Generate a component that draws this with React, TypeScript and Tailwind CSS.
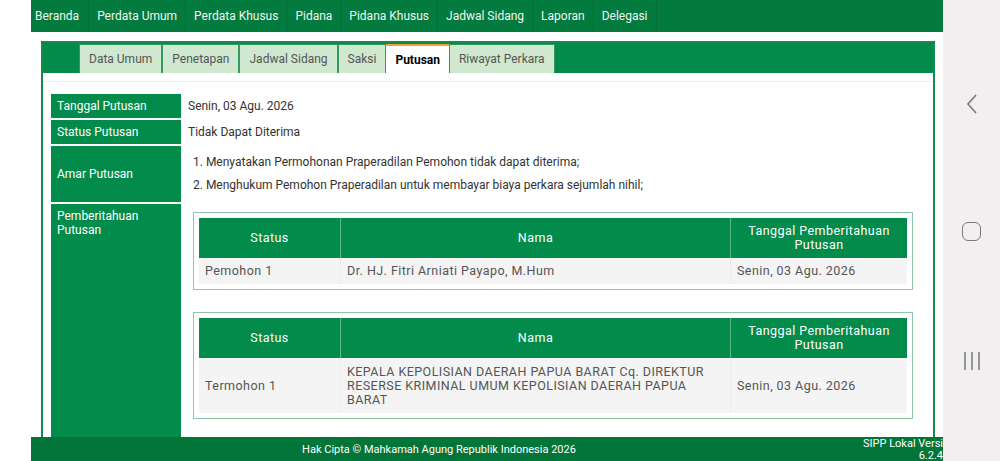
const menu = ["Beranda", "Perdata Umum", "Perdata Khusus", "Pidana", "Pidana Khusus", "Jadwal Sidang", "Laporan", "Delegasi"];
const tabs = ["Data Umum", "Penetapan", "Jadwal Sidang", "Saksi", "Putusan", "Riwayat Perkara"];

type Row = { status: string; nama: string[]; tanggal: string; h: string };

const pemberitahuan: Row[] = [
  { status: "Pemohon 1", nama: ["Dr. HJ. Fitri Arniati Payapo, M.Hum"], tanggal: "Senin, 03 Agu. 2026", h: "h-[26px]" },
  {
    status: "Termohon 1",
    nama: ["KEPALA KEPOLISIAN DAERAH PAPUA BARAT Cq. DIREKTUR", "RESERSE KRIMINAL UMUM KEPOLISIAN DAERAH PAPUA", "BARAT"],
    tanggal: "Senin, 03 Agu. 2026",
    h: "h-[55px]",
  },
];

function PihakTable({ row }: { row: Row }) {
  return (
    <div className="border border-[#8fc6a6] p-[5px]">
      <div className="flex h-[40px] bg-[#028b4b] text-white text-[12.5px] tracking-[0.45px] leading-[14px]">
        <div className="w-[142px] flex items-center justify-center border-r border-[#5bb886]">Status</div>
        <div className="w-[390px] flex items-center justify-center border-r border-[#5bb886]">Nama</div>
        <div className="flex-1 flex items-center justify-center text-center">
          Tanggal Pemberitahuan
          <br />
          Putusan
        </div>
      </div>
      <div className={`flex ${row.h} bg-[#f4f4f4] text-[#555] text-[12.5px] tracking-[0.45px] leading-[14px]`}>
        <div className="w-[142px] flex items-center pl-[6px] border-r border-[#ececec]">{row.status}</div>
        <div className="w-[390px] flex flex-col justify-center pl-[6px] border-r border-[#ececec]">
          {row.nama.map((n) => (
            <span key={n}>{n}</span>
          ))}
        </div>
        <div className="flex-1 flex items-center pl-[6px]">{row.tanggal}</div>
      </div>
    </div>
  );
}

export default function App() {
  return (
    <div className="w-[1000px] h-[461px] overflow-hidden flex bg-white" style={{ fontFamily: "Roboto, 'Liberation Sans', sans-serif" }}>
      <div className="w-[943px] flex flex-col pl-[31px]">
        {/* top menu */}
        <div className="h-[32px] bg-[#037a3e] flex items-stretch text-[12px] text-[#eef7f1] shrink-0">
          {menu.map((m, i) => (
            <div key={m} className={`flex items-center border-r border-[#026d36] ${i === 0 ? "pl-[4px] pr-[9px]" : "px-[8px]"}`}>
              {m}
            </div>
          ))}
        </div>

        <div className="flex-1 flex flex-col min-h-0 pt-[9px] pl-[10px] pr-[8px]">
          <div className="flex-1 min-h-0 flex flex-col border-x-2 border-t-2 border-[#17894b] overflow-hidden">
            {/* tabs */}
            <div className="h-[30px] bg-[#028b4b] flex items-end pl-[36px] shrink-0">
              {tabs.map((t) => {
                const active = t === "Putusan";
                return (
                  <div
                    key={t}
                    className={
                      active
                        ? "h-[29px] px-[9px] flex items-center bg-white text-black font-bold text-[12px] border-t-2 border-[#e9a43a]"
                        : "h-[29px] px-[9px] flex items-center bg-[#cfe8cf] text-[#555] text-[12px] border border-b-0 border-[#2f9c5f]"
                    }
                  >
                    {t}
                  </div>
                );
              })}
            </div>

            <div className="flex-1 min-h-0 bg-white flex flex-col">
              <div className="h-[9px] border-b border-[#eeeeee] shrink-0" />
              <div className="flex-1 flex flex-col gap-[2px] pt-[12px] pl-[8px] text-[12px]">
                <div className="flex h-[24px]">
                  <div className="w-[130px] bg-[#028b4b] text-white flex items-center pl-[6px]">Tanggal Putusan</div>
                  <div className="flex items-center pl-[7px] text-[#333]">Senin, 03 Agu. 2026</div>
                </div>
                <div className="flex h-[24px]">
                  <div className="w-[130px] bg-[#028b4b] text-white flex items-center pl-[6px]">Status Putusan</div>
                  <div className="flex items-center pl-[7px] text-[#333]">Tidak Dapat Diterima</div>
                </div>
                <div className="flex h-[56px]">
                  <div className="w-[130px] bg-[#028b4b] text-white flex items-center pl-[6px]">Amar Putusan</div>
                  <ol className="flex flex-col gap-[7px] pt-[8px] pl-[12px] text-[#333] leading-[16px]">
                    <li>1. Menyatakan Permohonan Praperadilan Pemohon tidak dapat diterima;</li>
                    <li>2. Menghukum Pemohon Praperadilan untuk membayar biaya perkara sejumlah nihil;</li>
                  </ol>
                </div>
                <div className="flex flex-1">
                  <div className="w-[130px] bg-[#028b4b] text-white pl-[6px] pt-[5px] leading-[14px]">
                    Pemberitahuan
                    <br />
                    Putusan
                  </div>
                  <div className="w-[732px] flex flex-col gap-[22px] pt-[8px] pl-[12px]">
                    {pemberitahuan.map((r) => (
                      <PihakTable key={r.status} row={r} />
                    ))}
                  </div>
                </div>
              </div>
            </div>
          </div>
        </div>

        {/* footer */}
        <div className="h-[24px] bg-[#047539] flex text-white text-[11px] shrink-0">
          <div className="flex-1 flex items-center justify-center pt-[3px]">Hak Cipta © Mahkamah Agung Republik Indonesia 2026</div>
          <div className="w-[96px] text-right leading-[12px] pt-[1px]">
            SIPP Lokal Versi
            <br />
            6.2.4
          </div>
        </div>
      </div>

      {/* system navigation bar */}
      <div className="flex-1 bg-[#f2eff0] flex flex-col items-center text-[#777]">
        <svg className="mt-[93px]" width="14" height="22" viewBox="0 0 14 22" fill="none" stroke="#7a7a7a" strokeWidth="1.6">
          <path d="M11 2 L3 11 L11 20" />
        </svg>
        <div className="mt-[107px] w-[19px] h-[19px] rounded-[6px] border-[1.8px] border-[#7a7a7a]" />
        <svg className="mt-[110px]" width="20" height="20" viewBox="0 0 20 20" stroke="#7a7a7a" strokeWidth="1.5">
          <path d="M3 1 V19 M10 1 V19 M17 1 V19" />
        </svg>
      </div>
    </div>
  );
}
